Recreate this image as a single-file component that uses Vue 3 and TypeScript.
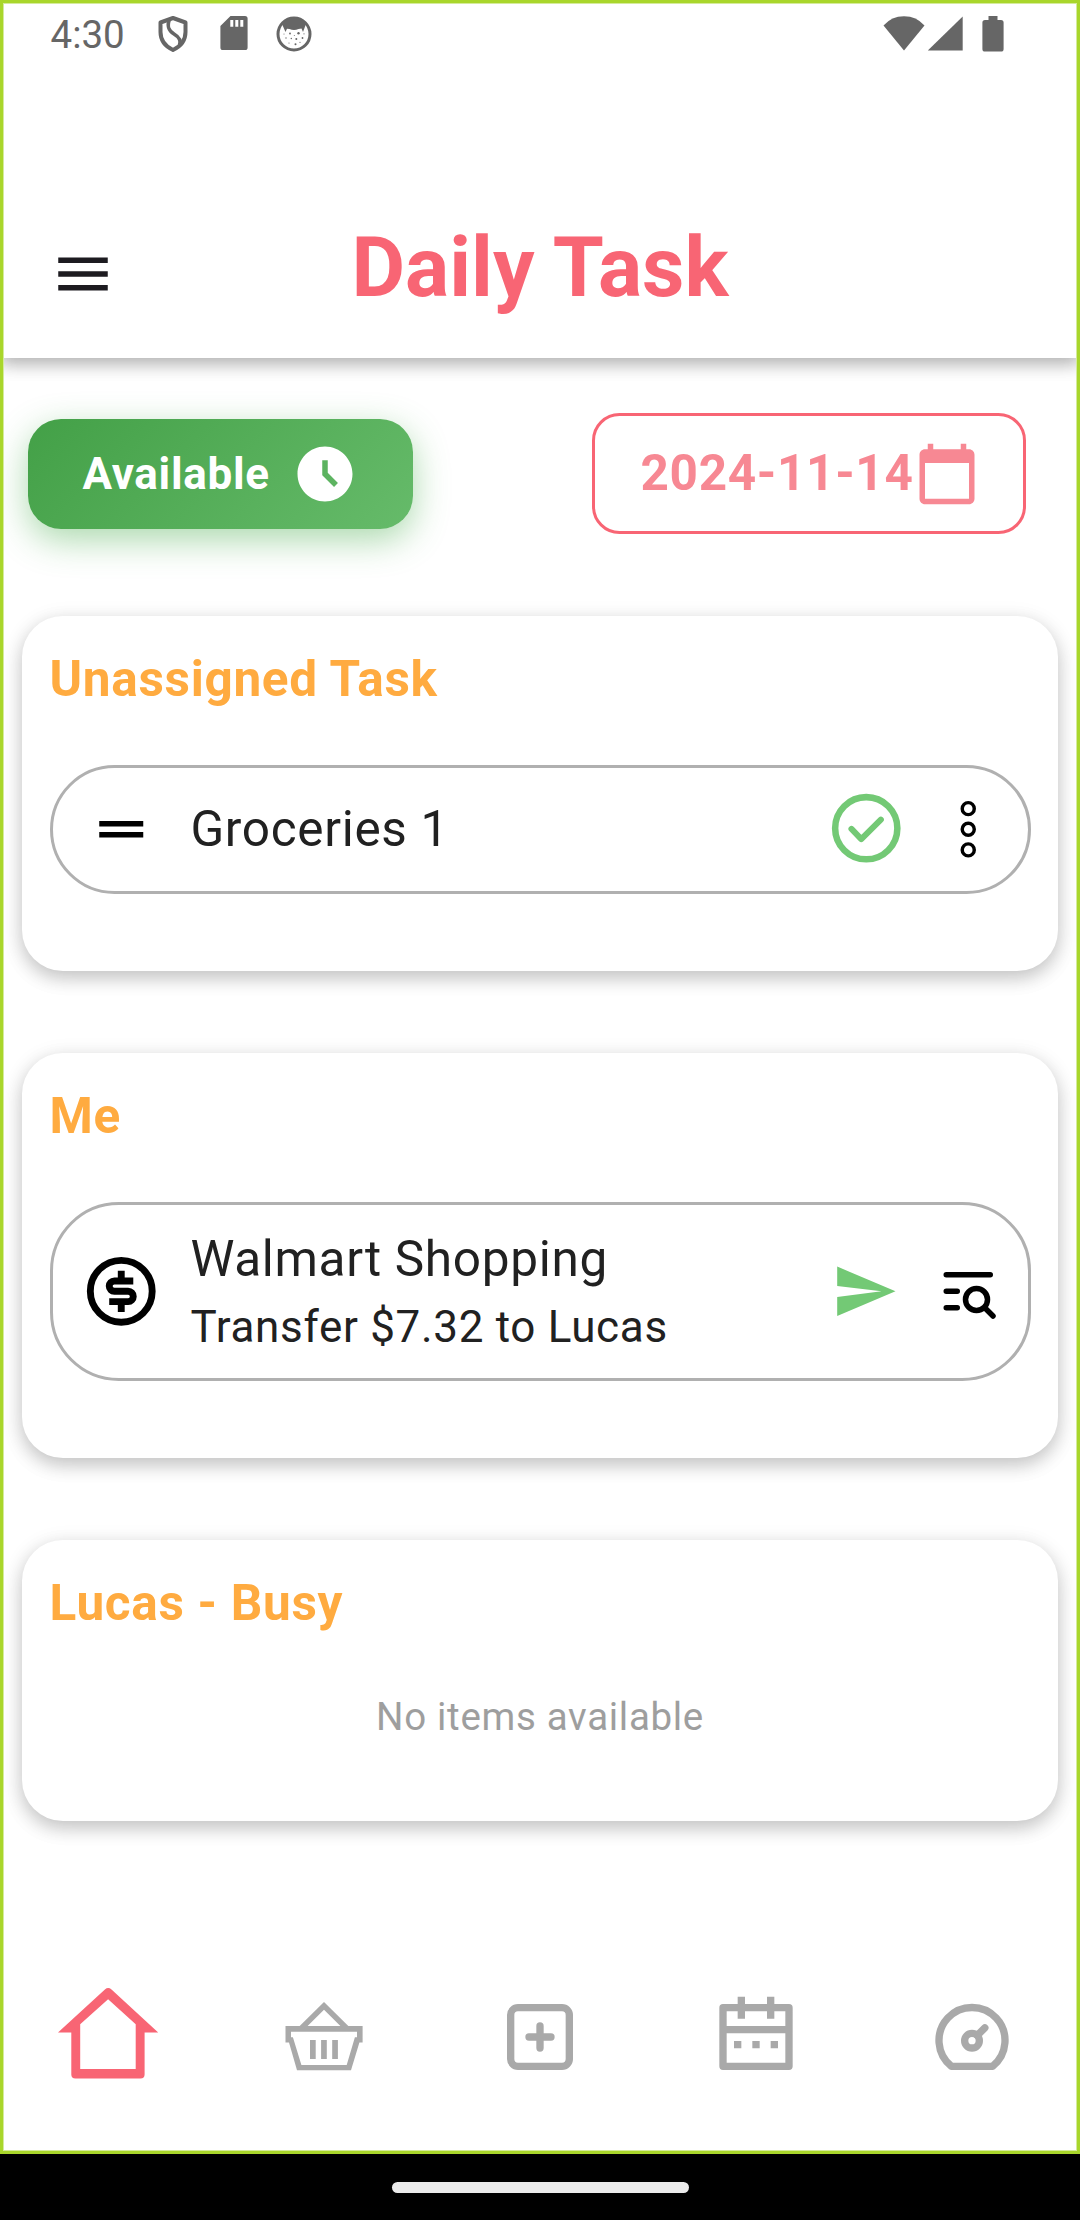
<script setup lang="ts">
import { ref } from 'vue'

type Icon = 'drag' | 'dollar' | 'check' | 'more' | 'send' | 'search'

interface Task {
  title: string
  subtitle?: string
  lead: Icon
  actions: Icon[]
}

interface Group {
  name: string
  tasks: Task[]
}

const date = ref('2024-11-14')

const groups = ref<Group[]>([
  {
    name: 'Unassigned Task',
    tasks: [{ title: 'Groceries 1', lead: 'drag', actions: ['check', 'more'] }],
  },
  {
    name: 'Me',
    tasks: [
      {
        title: 'Walmart Shopping',
        subtitle: 'Transfer $7.32 to Lucas',
        lead: 'dollar',
        actions: ['send', 'search'],
      },
    ],
  },
  { name: 'Lucas - Busy', tasks: [] },
])
</script>

<template>
  <div class="device">
    <div class="screen">
      <header class="top">
        <div class="status">
          <span class="clock">4:30</span>
          <svg class="st shield" viewBox="0 0 32 38" width="32" height="38">
            <path d="M16 3 L28.5 7.5 V17 C28.5 25 23.5 31.5 16 35 C8.5 31.5 3.5 25 3.5 17 V7.5 Z" fill="none" stroke="#666" stroke-width="4" stroke-linejoin="round" />
            <path d="M12.5 4 C9.5 12 12 16 17 19 C22 22 24.5 25 22.5 30" fill="none" stroke="#666" stroke-width="3.6" />
          </svg>
          <svg class="st sd" viewBox="0 0 28 36" width="28" height="36">
            <path d="M10.5 1 H25 a2.6 2.6 0 0 1 2.6 2.6 V32.4 A2.6 2.6 0 0 1 25 35 H3 A2.6 2.6 0 0 1 .4 32.4 V11 Z" fill="#666" />
            <path d="M10.3 5h3v6.7h-3zM15.3 5h3v6.7h-3zM20.3 5h3v6.7h-3z" fill="#fff" />
          </svg>
          <svg class="st cat" viewBox="0 0 36 36" width="36" height="36">
            <circle cx="18" cy="18" r="16" fill="#fff" stroke="#666" stroke-width="3" />
            <path d="M6 8 Q10 2 18 2 Q26 2 30 8 L27 16 L25.5 12.6 L22.5 13 Q18 15 13.5 13 L11 12.8 L9.5 16 Z" fill="#666" />
            <g fill="#666">
              <circle cx="14" cy="17.5" r=".9" /><circle cx="22.5" cy="17.3" r="1.2" />
              <circle cx="10" cy="22" r=".7" /><circle cx="15.3" cy="22.5" r=".7" />
              <circle cx="20.3" cy="23" r="1" /><circle cx="26.5" cy="22" r=".9" />
              <circle cx="13" cy="27" r=".6" /><circle cx="19.5" cy="28.3" r="1" />
              <circle cx="24" cy="26.3" r=".6" /><circle cx="18.3" cy="19.5" r=".5" />
              <circle cx="8" cy="18" r=".5" /><circle cx="28" cy="17.8" r=".6" />
            </g>
          </svg>
          <span class="gap"></span>
          <svg viewBox="0 0 122 38" width="122" height="38" fill="#666">
            <path d="M.5 10.5 Q8.5 1.2 21 1.2 Q33.5 1.2 41.5 10.5 L21 35.5 Z" />
            <path d="M79.7 1.5 V35.5 H44.8 Z" />
            <path d="M105.5 1 h9 v4 h3.5 a2.6 2.6 0 0 1 2.6 2.6 V34 a2.6 2.6 0 0 1 -2.6 2.6 H102 a2.6 2.6 0 0 1 -2.6 -2.6 V7.6 A2.6 2.6 0 0 1 102 5 h3.5z" />
          </svg>
        </div>
        <div class="bar">
          <svg class="menu" viewBox="0 0 24 24" width="66" height="66" fill="#1d1b20">
            <path d="M3 18h18v-2H3v2zm0-5h18v-2H3v2zm0-7v2h18V6H3z" />
          </svg>
          <h1>Daily Task</h1>
          <span></span>
        </div>
      </header>

      <main>
        <div class="filters">
          <button class="available">
            <span>Available</span>
            <svg viewBox="0 0 24 24" width="66" height="66" fill="#fff">
              <path d="M11.99 2C6.47 2 2 6.48 2 12s4.47 10 9.99 10C17.52 22 22 17.52 22 12S17.52 2 11.99 2zm3.3 14.71L11 12.41V7h2v4.59l3.71 3.71-1.42 1.41z" />
            </svg>
          </button>
          <button class="date">
            <span>{{ date }}</span>
            <svg viewBox="0 0 24 24" width="66" height="66" fill="#f78893">
              <path d="M20 3h-1V1h-2v2H7V1H5v2H4c-1.1 0-2 .9-2 2v16c0 1.1.9 2 2 2h16c1.1 0 2-.9 2-2V5c0-1.1-.9-2-2-2zm0 18H4V8h16v13z" />
            </svg>
          </button>
        </div>

        <section v-for="g in groups" :key="g.name" class="card">
          <h2>{{ g.name }}</h2>
          <div v-for="t in g.tasks" :key="t.title" class="task" :class="{ tall: t.subtitle }">
            <svg v-if="t.lead === 'drag'" class="lead" viewBox="-3 -3 30 30">
              <path d="M20 9H4v2h16V9zM4 15h16v-2H4v2z" />
            </svg>
            <svg v-else class="lead" viewBox="0 0 24 24" fill="none" stroke="#000" stroke-width="2">
              <circle cx="12" cy="12" r="9" />
              <path d="M15.5 9H10a1.5 1.5 0 0 0 0 3h4a1.5 1.5 0 0 1 0 3H8.5M12 6v2.5M12 15.5V18" />
            </svg>
            <div class="text">
              <span class="t1">{{ t.title }}</span>
              <span v-if="t.subtitle" class="t2">{{ t.subtitle }}</span>
            </div>
            <template v-for="a in t.actions" :key="a">
              <svg v-if="a === 'check'" class="act" viewBox="0 0 24 24" fill="none" stroke="#73c975">
                <circle cx="12" cy="11.7" r="9.05" stroke-width="1.9" />
                <path d="M7.7 11.9l2.85 2.95 5.7-5.65" stroke-width="1.75" stroke-linecap="round" stroke-linejoin="round" />
              </svg>
              <svg v-else-if="a === 'more'" class="act" viewBox="0 0 24 24" fill="none" stroke="#000">
                <circle cx="12" cy="6" r="1.75" /><circle cx="12" cy="12" r="1.75" /><circle cx="12" cy="18" r="1.75" />
              </svg>
              <svg v-else-if="a === 'send'" class="act" viewBox="0 0 82.5 82.5" fill="#73c975">
                <path d="M12.2 16.6 L70.5 41.3 L12.2 66 V47 L56.5 41.3 L12.2 36 Z" />
              </svg>
              <svg v-else class="act" viewBox="-3 -3 30 30" fill="none" stroke="#000" stroke-width="2" stroke-linecap="round">
                <path d="M4 6h16M4 12h4M4 18h4M18 18l3 3" /><circle cx="15" cy="15" r="4" />
              </svg>
            </template>
          </div>
          <p v-if="!g.tasks.length">No items available</p>
        </section>
      </main>

      <nav>
        <a>
          <svg viewBox="53 1982 110 110" width="110" height="110" fill="#f86574">
            <path fill-rule="evenodd" d="M58 2032.5 L104.9 1989.4 Q108.2 1986.8 111.5 1989.4 L158.2 2032.5 H144.6 V2074.5 Q144.6 2078.6 140.5 2078.6 H75.4 Q71.3 2078.6 71.3 2074.5 V2032.5 Z M80.2 2024.2 V2069 H135.7 V2024.2 L108.1 1999.2 Z" />
          </svg>
        </a>
        <a>
          <svg viewBox="280 1993 88 88" width="88" height="88" fill="#a9a9a9">
            <path fill-rule="evenodd" d="M324 2002 L348.3 2026.1 H362.6 V2042.6 H359.4 L351 2070.2 H297 L289 2042.6 H285.5 V2026.1 H299.7 Z M324 2009.8 L307.6 2026.1 H340.4 Z M291 2031.7 V2037.3 H292.9 L301.4 2065 H346.7 L354.9 2037.3 H357 V2031.7 Z" />
            <path d="M310 2040h5.7v19H310zM321.1 2040h5.7v19h-5.7zM332.2 2040h5.7v19h-5.7z" />
          </svg>
        </a>
        <a>
          <svg viewBox="0 0 24 24" width="88" height="88" fill="none" stroke="#a9a9a9" stroke-width="2" stroke-linecap="round">
            <rect x="4" y="4" width="16" height="16" rx="2" />
            <path d="M12 9v6M9 12h6" />
          </svg>
        </a>
        <a>
          <svg viewBox="0 0 24 24" width="88" height="88" fill="none" stroke="#a9a9a9" stroke-width="2" stroke-linejoin="round">
            <path d="M3 4h18v16H3zM3 10h18M8 1v6M16 1v6M6 14.1h2M11 14.1h2M16 14.1h2" />
          </svg>
        </a>
        <a>
          <svg viewBox="0 0 24 24" width="88" height="88" fill="none" stroke="#a9a9a9" stroke-width="2" stroke-linecap="round" stroke-linejoin="round">
            <circle cx="12" cy="13" r="2" />
            <path d="M13.45 11.55L15.5 9.5M6.4 20a9 9 0 1 1 11.2 0z" />
          </svg>
        </a>
      </nav>
    </div>
    <div class="gesture"><span></span></div>
  </div>
</template>

<style>
body {
  background: #000;
  overflow: hidden;
}
</style>

<style scoped>
* {
  box-sizing: border-box;
  margin: 0;
}
svg {
  display: block;
  flex: none;
}
button {
  border: 0;
  background: none;
  font: inherit;
  padding: 0;
}
.device {
  width: 1080px;
  height: 2220px;
  display: flex;
  flex-direction: column;
  font-family: Roboto, "Liberation Sans", sans-serif;
  background: #000;
}
.screen {
  position: relative;
  height: 2154px;
  flex: none;
  display: flex;
  flex-direction: column;
  background: #fff;
  overflow: hidden;
}
/* frame drawn over all content */
.screen::after {
  content: "";
  position: absolute;
  inset: 0;
  pointer-events: none;
  z-index: 3;
  box-shadow: inset 0 0 0 3px #a9d62b, inset 0 0 0 4px #d5eb9c;
}
.top {
  height: 358px;
  flex: none;
  background: #fff;
  z-index: 1;
  box-shadow: 0 6px 16px rgba(0, 0, 0, 0.23), 0 4px 20px rgba(0, 0, 0, 0.12);
}
.status {
  height: 68px;
  display: flex;
  align-items: flex-start;
  padding: 14.5px 75.5px 0 50.5px;
}
.clock {
  width: 106px;
  font-size: 38.5px;
  line-height: 40px;
  color: #666;
}
.sd {
  margin-left: 31px;
}
.cat {
  margin-left: 28.5px;
  margin-top: 1px;
}
.gap {
  flex: 1;
}
.bar {
  display: grid;
  grid-template-columns: 1fr auto 1fr;
  align-items: center;
  padding: 0 49.5px;
  margin-top: 150px;
  height: 100px;
}
.menu {
  margin-top: 11px;
}
h1 {
  font-size: 82.5px;
  line-height: 100px;
  font-weight: 700;
  color: #f86574;
  white-space: nowrap;
}
main {
  flex: 1;
  min-height: 0;
  padding: 55px 22px 0;
}
.filters {
  display: flex;
  align-items: center;
  justify-content: space-between;
  padding: 0 32px 0 5.5px;
  height: 121px;
  margin-bottom: 82px;
}
.available {
  width: 385px;
  height: 110px;
  border-radius: 33px;
  background: linear-gradient(135deg, #43a047, #66bb6a);
  box-shadow: 0 11px 35px rgba(76, 175, 80, 0.47);
  display: flex;
  align-items: center;
  justify-content: space-between;
  padding: 0 55px;
  color: #fff;
  font-size: 44px;
  font-weight: 700;
  letter-spacing: 0.6875px;
}
.date {
  width: 434px;
  height: 121px;
  border: 3px solid #f86574;
  border-radius: 27.5px;
  display: flex;
  align-items: center;
  justify-content: center;
  padding-left: 2px;
  color: #f78893;
  font-size: 49.5px;
  font-weight: 700;
  letter-spacing: 0.6875px;
}
.date span {
  padding-bottom: 2px;
}
.card {
  background: #fff;
  border-radius: 41px;
  margin-bottom: 82px;
  padding: 28px 27.5px 77px;
  box-shadow: 0 7px 18px rgba(0, 0, 0, 0.18), 0 5px 24px rgba(0, 0, 0, 0.09);
}
h2 {
  font-size: 49.5px;
  line-height: 70px;
  font-weight: 700;
  letter-spacing: 0.6875px;
  color: #ffab40;
  margin-bottom: 51px;
}
.task {
  height: 129px;
  border: 3px solid #b0b0b0;
  border-radius: 68.75px;
  display: flex;
  align-items: center;
  padding: 0 18.4px 0 27.2px;
  color: #212121;
}
.task.tall {
  height: 178.5px;
}
.lead,
.act {
  width: 82.5px;
  height: 82.5px;
}
.act + .act {
  margin-left: 19.5px;
}
.text {
  flex: 1;
  margin-left: 28.2px;
  padding-bottom: 1px;
  display: flex;
  flex-direction: column;
}
.tall .text {
  padding: 2px 0 0;
}
.t1 {
  font-size: 49.5px;
  line-height: 70px;
  letter-spacing: 0.6875px;
}
.t2 {
  font-size: 44px;
  line-height: 66px;
  letter-spacing: 0.6875px;
}
p {
  font-size: 38.5px;
  line-height: 55.5px;
  letter-spacing: 0.6875px;
  color: #9e9e9e;
  text-align: center;
}
nav {
  flex: none;
  height: 234px;
  display: flex;
}
nav a {
  flex: 1;
  display: flex;
  align-items: center;
  justify-content: center;
}
.gesture {
  height: 66px;
  display: flex;
  align-items: center;
  justify-content: center;
}
.gesture span {
  width: 297px;
  height: 11px;
  border-radius: 6px;
  background: #ebebeb;
}
</style>
